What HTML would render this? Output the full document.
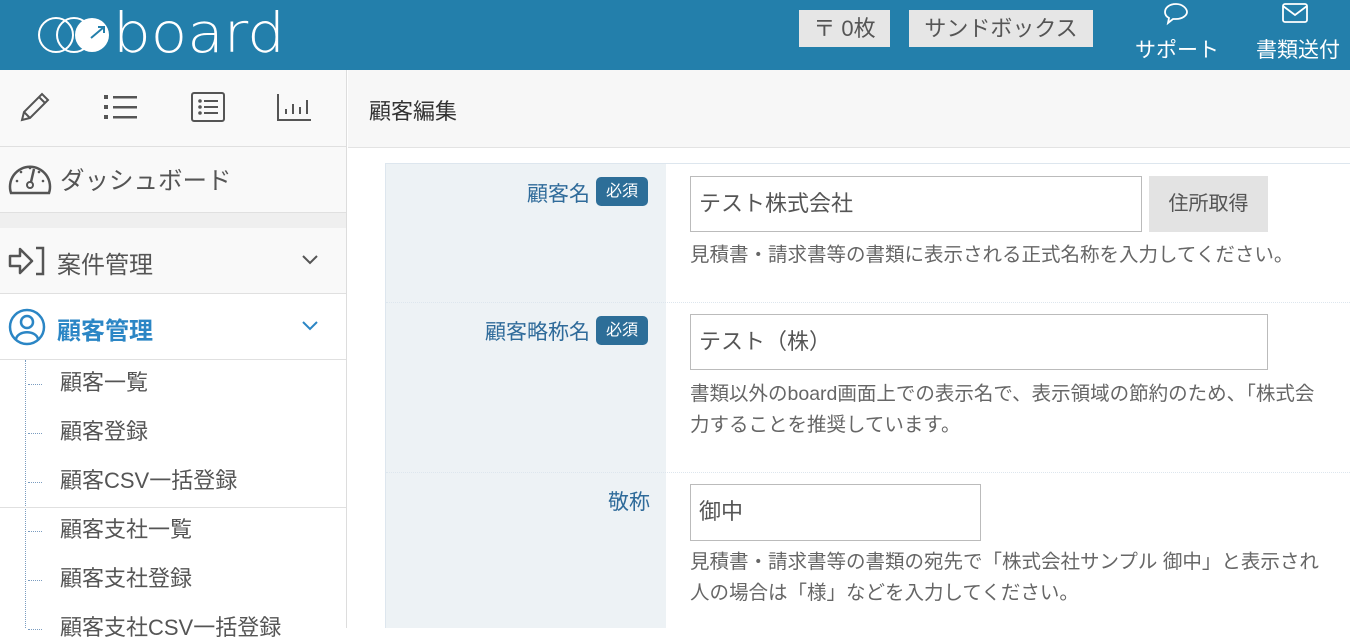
<!DOCTYPE html>
<html><head><meta charset="utf-8"><style>
*{margin:0;padding:0;box-sizing:border-box}
body{width:1350px;height:628px;overflow:hidden;background:#fff;font-family:"Liberation Sans","Noto Sans CJK JP",sans-serif;color:#555;position:relative}
.abs{position:absolute}
#hdr{left:0;top:0;width:1350px;height:70px;background:#237fab}
.btn{background:#e6e6e6;color:#555;font-size:22px;height:37px;line-height:37px;top:10px;text-align:center}
.hl{color:#fff;font-size:21px;top:34px}
#side{left:0;top:70px;width:347px;height:558px;background:#f9f9f9;border-right:1px solid #ddd}
.row{position:absolute;left:0;width:346px;border-bottom:1px solid #e0e0e0}
.sub{position:absolute;left:60px;font-size:22px;color:#555;line-height:26px}
.dot{position:absolute;left:28px;width:14px;border-top:1px dotted #7a9cc0}
.lab{color:#2f6b9a;font-size:21px;text-align:right}
.badge{background:#2d6e98;color:#fff;font-size:16px;border-radius:5px;width:52px;height:29px;line-height:29px;text-align:center}
.inp{border:1px solid #bbb;background:#fff;font-size:22px;color:#555;padding-left:8px;height:56px;line-height:54px}
.desc{font-size:19.5px;color:#666;line-height:31px}
</style></head><body>
<div id="hdr" class="abs">
<svg class="abs" style="left:36px;top:4px" width="252" height="50" viewBox="0 0 252 50">
<g fill="none" stroke="#fff" stroke-width="2"><circle cx="20" cy="31" r="17"/><circle cx="38" cy="31" r="17"/></g>
<circle cx="56" cy="31" r="17" fill="#fff"/>
<path d="M55 34 L68 23 M62 23 L68 23 L68 29" stroke="#237fab" stroke-width="2" fill="none"/>
<text x="77" y="48" fill="#fff" font-family="DejaVu Sans,sans-serif" font-weight="200" font-size="55" textLength="172" lengthAdjust="spacingAndGlyphs">board</text>
</svg>
<div class="abs btn" style="left:799px;width:91px">〒 0枚</div>
<div class="abs btn" style="left:909px;width:184px">サンドボックス</div>
<svg class="abs" style="left:1162px;top:2px" width="28" height="24" viewBox="0 0 28 24"><path d="M14 2C7 2 3 6 3 10c0 3 2 5 4 6l-1 5 5-4c1 0 2 0 3 0 7 0 11-4 11-7S21 2 14 2z" fill="none" stroke="#fff" stroke-width="1.8"/></svg>
<div class="abs hl" style="left:1135px">サポート</div>
<svg class="abs" style="left:1282px;top:3px" width="26" height="20" viewBox="0 0 26 20"><rect x="1" y="1" width="24" height="18" rx="2" fill="none" stroke="#fff" stroke-width="1.8"/><path d="M1 3 L13 12 L25 3" fill="none" stroke="#fff" stroke-width="1.8"/></svg>
<div class="abs hl" style="left:1256px">書類送付</div>
</div>

<div id="side" class="abs">
<div class="row" style="top:0;height:77px;background:#f9f9f9">
<svg class="abs" style="left:18px;top:22px" width="32" height="32" viewBox="0 0 32 32"><path d="M4 28 L6 20 L24 2 L30 8 L12 26 Z M6 20 L12 26 M21 5 L27 11" fill="none" stroke="#555" stroke-width="2"/></svg>
<svg class="abs" style="left:104px;top:24px" width="34" height="26"><g fill="#555"><rect x="0" y="1" width="4" height="4"/><rect x="0" y="11" width="4" height="4"/><rect x="0" y="21" width="4" height="4"/><rect x="9" y="2" width="24" height="2.5"/><rect x="9" y="12" width="24" height="2.5"/><rect x="9" y="22" width="24" height="2.5"/></g></svg>
<svg class="abs" style="left:191px;top:22px" width="34" height="30"><rect x="1" y="1" width="32" height="28" rx="2" fill="none" stroke="#555" stroke-width="2"/><g fill="#555"><circle cx="9" cy="9" r="1.8"/><circle cx="9" cy="15" r="1.8"/><circle cx="9" cy="21" r="1.8"/><rect x="13" y="8" width="14" height="2"/><rect x="13" y="14" width="14" height="2"/><rect x="13" y="20" width="14" height="2"/></g></svg>
<svg class="abs" style="left:277px;top:24px" width="34" height="28"><path d="M1 0 V26 H34 M9 20V15 M16 20V10 M23 20V13 M30 20V6" fill="none" stroke="#555" stroke-width="2"/></svg>
</div>
<div class="row" style="top:77px;height:65px;border-bottom:none">
<svg class="abs" style="left:8px;top:14px" width="44" height="34" viewBox="0 0 44 34"><path d="M3 32 A20 20 0 1 1 41 32 Z" fill="none" stroke="#555" stroke-width="2.5"/><circle cx="22" cy="24" r="3" fill="none" stroke="#555" stroke-width="2"/><path d="M23 21 L26 8" stroke="#555" stroke-width="2.5"/><g fill="#555"><circle cx="9" cy="20" r="1.3"/><circle cx="13" cy="11" r="1.3"/><circle cx="22" cy="7" r="1.3"/><circle cx="31" cy="11" r="1.3"/><circle cx="35" cy="20" r="1.3"/></g></svg>
<div class="abs" style="left:60px;top:15px;font-size:24.5px;color:#555">ダッシュボード</div>
</div>
<div class="abs" style="left:0;top:142px;width:346px;height:16px;background:#efefef;border-top:1px solid #e0e0e0"></div>
<div class="row" style="top:158px;height:66px">
<svg class="abs" style="left:8px;top:18px" width="38" height="30" viewBox="0 0 38 30"><path d="M2 10 H12 V3 L24 15 L12 27 V20 H2 Z" fill="none" stroke="#555" stroke-width="2.5" stroke-linejoin="round"/><path d="M28 2 H35 V28 H28" fill="none" stroke="#555" stroke-width="2.5"/></svg>
<div class="abs" style="left:57px;top:17px;font-size:24px">案件管理</div>
<svg class="abs" style="left:302px;top:27px" width="16" height="10"><path d="M1 1 L8 8 L15 1" fill="none" stroke="#555" stroke-width="2"/></svg>
</div>
<div class="row" style="top:224px;height:66px;background:#fff">
<svg class="abs" style="left:8px;top:14px" width="38" height="38" viewBox="0 0 38 38"><circle cx="19" cy="19" r="17" fill="none" stroke="#2b86c5" stroke-width="2.5"/><circle cx="19" cy="14" r="6" fill="none" stroke="#2b86c5" stroke-width="2.5"/><path d="M8 31 C10 22 28 22 30 31" fill="none" stroke="#2b86c5" stroke-width="2.5"/></svg>
<div class="abs" style="left:57px;top:17px;font-size:24px;color:#2b86c5;font-weight:bold">顧客管理</div>
<svg class="abs" style="left:302px;top:27px" width="16" height="10"><path d="M1 1 L8 8 L15 1" fill="none" stroke="#2b86c5" stroke-width="2"/></svg>
</div>
<div class="abs" style="left:0;top:290px;width:346px;height:268px;background:#fff"></div>
<div class="abs" style="left:25px;top:290px;height:268px;border-left:1px dotted #7a9cc0"></div>
<div class="abs" style="left:0;top:437px;width:346px;border-top:1px solid #e0e0e0"></div>
<div class="dot" style="top:314px"></div><div class="sub" style="top:300px">顧客一覧</div>
<div class="dot" style="top:363px"></div><div class="sub" style="top:349px">顧客登録</div>
<div class="dot" style="top:412px"></div><div class="sub" style="top:398px">顧客CSV一括登録</div>
<div class="dot" style="top:461px"></div><div class="sub" style="top:447px">顧客支社一覧</div>
<div class="dot" style="top:510px"></div><div class="sub" style="top:496px">顧客支社登録</div>
<div class="dot" style="top:559px"></div><div class="sub" style="top:545px">顧客支社CSV一括登録</div>
</div>

<div class="abs" style="left:348px;top:70px;width:1002px;height:78px;background:#f7f7f7;border-bottom:1px solid #e3e3e3"></div>
<div class="abs" style="left:369px;top:94px;font-size:22px;color:#333">顧客編集</div>

<div class="abs" style="left:385px;top:163px;width:965px;height:465px;border-left:1px solid #dde6ee;border-top:1px solid #dde6ee"></div>
<div class="abs" style="left:386px;top:164px;width:280px;height:464px;background:#edf2f5"></div>
<div class="abs" style="left:386px;top:302px;width:964px;border-top:1px dotted #dde6ee"></div>
<div class="abs" style="left:386px;top:472px;width:964px;border-top:1px dotted #dde6ee"></div>

<div class="abs lab" style="left:400px;top:178px;width:190px">顧客名</div>
<div class="abs badge" style="left:596px;top:177px">必須</div>
<div class="abs inp" style="left:690px;top:176px;width:452px">テスト株式会社</div>
<div class="abs" style="left:1149px;top:176px;width:119px;height:56px;background:#e3e3e3;color:#555;font-size:20px;line-height:56px;text-align:center">住所取得</div>
<div class="abs desc" style="left:690px;top:240px;white-space:nowrap">見積書・請求書等の書類に表示される正式名称を入力してください。</div>

<div class="abs lab" style="left:400px;top:316px;width:190px">顧客略称名</div>
<div class="abs badge" style="left:596px;top:316px">必須</div>
<div class="abs inp" style="left:690px;top:314px;width:578px">テスト（株）</div>
<div class="abs desc" style="left:690px;top:379px;white-space:nowrap">書類以外のboard画面上での表示名で、表示領域の節約のため、「株式会<br>力することを推奨しています。</div>

<div class="abs lab" style="left:400px;top:486px;width:250px">敬称</div>
<div class="abs inp" style="left:690px;top:484px;width:291px;height:57px">御中</div>
<div class="abs desc" style="left:690px;top:547px;white-space:nowrap">見積書・請求書等の書類の宛先で「株式会社サンプル 御中」と表示され<br>人の場合は「様」などを入力してください。</div>
</body></html>
